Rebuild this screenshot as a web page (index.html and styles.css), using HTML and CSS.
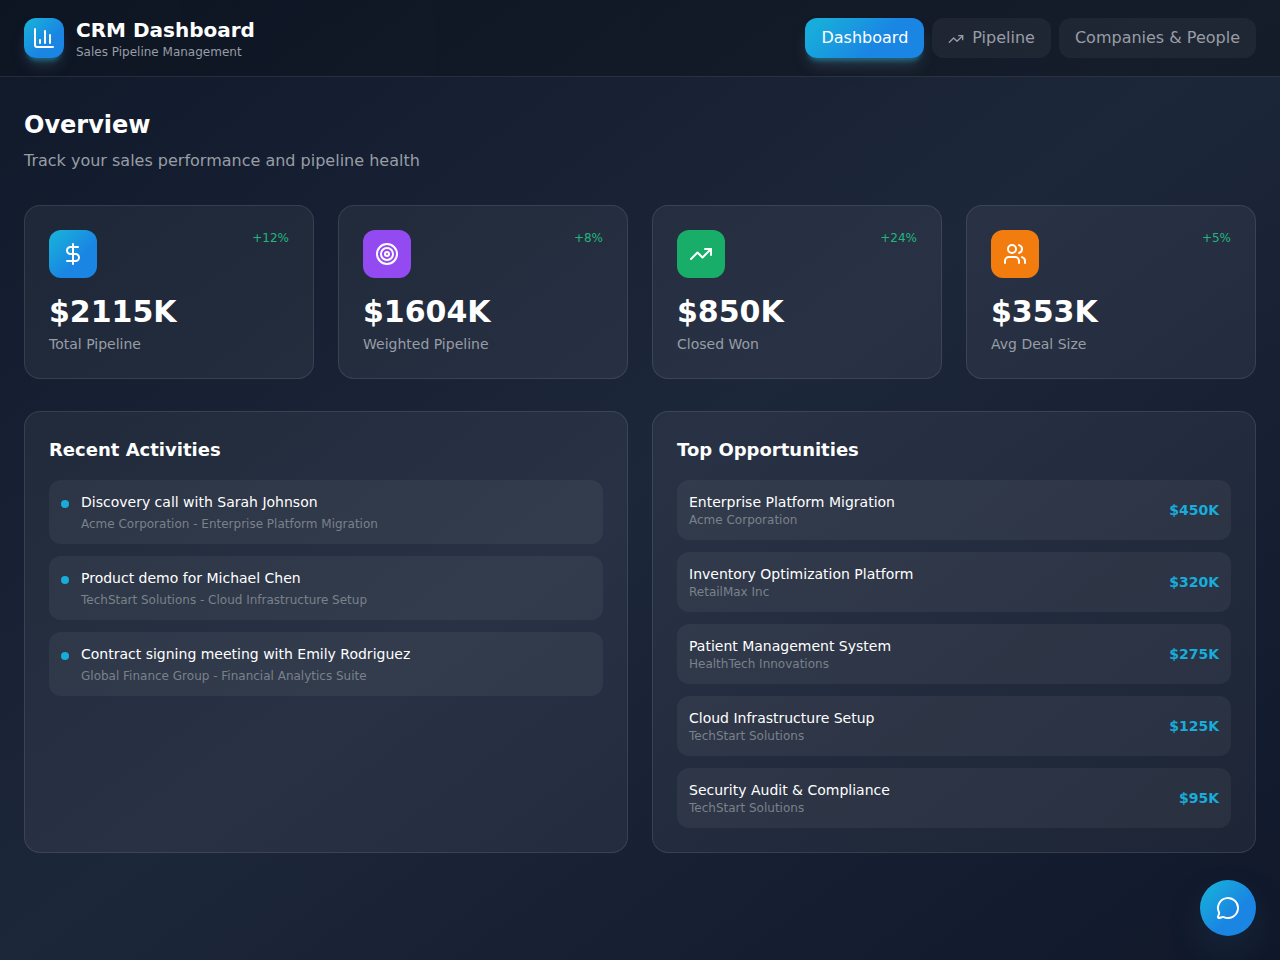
FILE: index.html
```html
<!DOCTYPE html>
<html lang="en">
<head>
<meta charset="utf-8">
<meta name="viewport" content="width=device-width, initial-scale=1">
<title>CRM Dashboard</title>
<link rel="stylesheet" href="styles.css">
</head>
<body>
<header class="topbar">
  <div class="brand">
    <div class="brand-logo">
      <svg class="icon" viewBox="0 0 24 24" aria-hidden="true"><path d="M3 3v16a2 2 0 0 0 2 2h16"/><path d="M18 17V9"/><path d="M13 17V5"/><path d="M8 17v-3"/></svg>
    </div>
    <div>
      <h1 class="brand-title">CRM Dashboard</h1>
      <p class="brand-subtitle">Sales Pipeline Management</p>
    </div>
  </div>
  <nav class="nav">
    <button class="nav-button nav-button-active" type="button">Dashboard</button>
    <button class="nav-button" type="button"><svg class="icon nav-icon" viewBox="0 0 24 24" aria-hidden="true"><path d="M16 7h6v6"/><path d="m22 7-8.500 8.500-5-5L2 17"/></svg>Pipeline</button>
    <button class="nav-button" type="button">Companies &amp; People</button>
  </nav>
</header>

<main class="content">
  <section class="intro">
    <h2 class="intro-title">Overview</h2>
    <p class="intro-text">Track your sales performance and pipeline health</p>
  </section>

  <section class="stats">
    <article class="card">
      <div class="stat-head">
        <div class="stat-icon stat-icon-blue"><svg class="icon" viewBox="0 0 24 24" aria-hidden="true"><path d="M12 2v20"/><path d="M17 5H9.500a3.500 3.500 0 0 0 0 7h5a3.500 3.500 0 0 1 0 7H6"/></svg></div>
        <span class="stat-change">+12%</span>
      </div>
      <p class="stat-value">$2115K</p>
      <p class="stat-label">Total Pipeline</p>
    </article>
    <article class="card">
      <div class="stat-head">
        <div class="stat-icon stat-icon-purple"><svg class="icon" viewBox="0 0 24 24" aria-hidden="true"><circle cx="12" cy="12" r="10"/><circle cx="12" cy="12" r="6"/><circle cx="12" cy="12" r="2"/></svg></div>
        <span class="stat-change">+8%</span>
      </div>
      <p class="stat-value">$1604K</p>
      <p class="stat-label">Weighted Pipeline</p>
    </article>
    <article class="card">
      <div class="stat-head">
        <div class="stat-icon stat-icon-green"><svg class="icon" viewBox="0 0 24 24" aria-hidden="true"><path d="M16 7h6v6"/><path d="m22 7-8.500 8.500-5-5L2 17"/></svg></div>
        <span class="stat-change">+24%</span>
      </div>
      <p class="stat-value">$850K</p>
      <p class="stat-label">Closed Won</p>
    </article>
    <article class="card">
      <div class="stat-head">
        <div class="stat-icon stat-icon-orange"><svg class="icon" viewBox="0 0 24 24" aria-hidden="true"><path d="M16 21v-2a4 4 0 0 0-4-4H6a4 4 0 0 0-4 4v2"/><circle cx="9" cy="7" r="4"/><path d="M22 21v-2a4 4 0 0 0-3-3.870"/><path d="M16 3.130a4 4 0 0 1 0 7.750"/></svg></div>
        <span class="stat-change">+5%</span>
      </div>
      <p class="stat-value">$353K</p>
      <p class="stat-label">Avg Deal Size</p>
    </article>
  </section>

  <section class="panels">
    <article class="card">
      <h3 class="panel-title">Recent Activities</h3>
      <ul class="list">
        <li class="row activity">
          <span class="activity-dot"></span>
          <div>
            <p class="row-title">Discovery call with Sarah Johnson</p>
            <p class="row-note activity-note">Acme Corporation - Enterprise Platform Migration</p>
          </div>
        </li>
        <li class="row activity">
          <span class="activity-dot"></span>
          <div>
            <p class="row-title">Product demo for Michael Chen</p>
            <p class="row-note activity-note">TechStart Solutions - Cloud Infrastructure Setup</p>
          </div>
        </li>
        <li class="row activity">
          <span class="activity-dot"></span>
          <div>
            <p class="row-title">Contract signing meeting with Emily Rodriguez</p>
            <p class="row-note activity-note">Global Finance Group - Financial Analytics Suite</p>
          </div>
        </li>
      </ul>
    </article>
    <article class="card">
      <h3 class="panel-title">Top Opportunities</h3>
      <ul class="list">
        <li class="row deal">
          <div>
            <p class="row-title">Enterprise Platform Migration</p>
            <p class="row-note">Acme Corporation</p>
          </div>
          <span class="deal-value">$450K</span>
        </li>
        <li class="row deal">
          <div>
            <p class="row-title">Inventory Optimization Platform</p>
            <p class="row-note">RetailMax Inc</p>
          </div>
          <span class="deal-value">$320K</span>
        </li>
        <li class="row deal">
          <div>
            <p class="row-title">Patient Management System</p>
            <p class="row-note">HealthTech Innovations</p>
          </div>
          <span class="deal-value">$275K</span>
        </li>
        <li class="row deal">
          <div>
            <p class="row-title">Cloud Infrastructure Setup</p>
            <p class="row-note">TechStart Solutions</p>
          </div>
          <span class="deal-value">$125K</span>
        </li>
        <li class="row deal">
          <div>
            <p class="row-title">Security Audit &amp; Compliance</p>
            <p class="row-note">TechStart Solutions</p>
          </div>
          <span class="deal-value">$95K</span>
        </li>
      </ul>
    </article>
  </section>
</main>

<button class="chat-button" type="button" aria-label="Open chat">
  <svg class="icon" viewBox="0 0 24 24" aria-hidden="true"><path d="M2.992 16.342a2 2 0 0 1 .094 1.167l-1.065 3.290a1 1 0 0 0 1.236 1.168l3.413-.998a2 2 0 0 1 1.099.092 10 10 0 1 0-4.777-4.719"/></svg>
</button>
</body>
</html>
```
FILE: styles.css
```css
:root {
  --accent: #18acdb;
  --accent-gradient: linear-gradient(135deg, #18acdb 12%, #1a85e3 62%);
  --accent-shadow: 0 10px 15px -3px rgba(110, 150, 175, 0.25), 0 6px 4px -3px rgba(6, 182, 212, 0.4);
  --muted: #989da6;
}

* {
  box-sizing: border-box;
  margin: 0;
  padding: 0;
}

body {
  min-height: 100vh;
  font-family: "DejaVu Sans", sans-serif;
  font-size: 16px;
  line-height: 24px;
  color: #fff;
  background: linear-gradient(to bottom right, #10192a, #1d273a, #10182a);
}

.icon {
  width: 24px;
  height: 24px;
  fill: none;
  stroke: currentColor;
  stroke-width: 2;
  stroke-linecap: round;
  stroke-linejoin: round;
}

.topbar {
  display: flex;
  align-items: center;
  justify-content: space-between;
  padding: 16px 24px;
  background: linear-gradient(to right, rgba(0, 0, 0, 0.18), rgba(0, 0, 0, 0.28));
  border-bottom: 1px solid rgba(255, 255, 255, 0.1);
}

.brand {
  display: flex;
  align-items: center;
  gap: 12px;
}

.brand-logo {
  display: flex;
  align-items: center;
  justify-content: center;
  width: 40px;
  height: 40px;
  border-radius: 12px;
  background: var(--accent-gradient);
  box-shadow: var(--accent-shadow);
}

.brand-title {
  font-size: 20px;
  line-height: 28px;
}

.brand-subtitle {
  font-size: 12px;
  line-height: 16px;
  color: var(--muted);
}

.nav {
  display: flex;
  gap: 8px;
}

.nav-button {
  padding: 8px 16px;
  border: 0;
  border-radius: 12px;
  font: inherit;
  color: var(--muted);
  background: rgba(255, 255, 255, 0.05);
  cursor: pointer;
}

.nav-button-active {
  color: #fff;
  background: var(--accent-gradient);
  box-shadow: var(--accent-shadow);
}

.nav-icon {
  width: 16px;
  height: 16px;
  margin-right: 8px;
  vertical-align: middle;
}

.content {
  padding: 32px 24px;
}

.intro {
  margin-bottom: 32px;
}

.intro-title {
  margin-bottom: 8px;
  font-size: 24px;
  line-height: 32px;
}

.intro-text {
  color: var(--muted);
}

.stats {
  display: grid;
  grid-template-columns: repeat(4, 1fr);
  gap: 24px;
  margin-bottom: 32px;
}

.panels {
  display: grid;
  grid-template-columns: repeat(2, 1fr);
  gap: 24px;
}

.card {
  padding: 24px;
  border: 1px solid rgba(255, 255, 255, 0.1);
  border-radius: 16px;
  background: rgba(255, 255, 255, 0.05);
}

.stat-head {
  display: flex;
  align-items: flex-start;
  justify-content: space-between;
  margin-bottom: 16px;
}

.stat-icon {
  display: flex;
  align-items: center;
  justify-content: center;
  width: 48px;
  height: 48px;
  border-radius: 12px;
}

.stat-icon-blue {
  background: var(--accent-gradient);
}

.stat-icon-purple {
  background: #934bf1;
}

.stat-icon-green {
  background: #18ae69;
}

.stat-icon-orange {
  background: #f27d0e;
}

.stat-change {
  font-size: 12px;
  line-height: 16px;
  color: #22b67c;
}

.stat-value {
  margin-bottom: 4px;
  font-size: 30px;
  font-weight: 700;
  line-height: 36px;
}

.stat-label {
  font-size: 14px;
  line-height: 20px;
  color: var(--muted);
}

.panel-title {
  margin-bottom: 16px;
  font-size: 18px;
  line-height: 28px;
}

.list {
  display: grid;
  gap: 12px;
  list-style: none;
}

.row {
  display: flex;
  gap: 12px;
  padding: 12px;
  border-radius: 12px;
  background: rgba(255, 255, 255, 0.05);
}

.row-title {
  font-size: 14px;
  line-height: 20px;
}

.row-note {
  font-size: 12px;
  line-height: 16px;
  color: #7a818b;
}

.activity {
  align-items: flex-start;
}

.activity-dot {
  width: 8px;
  height: 8px;
  margin-top: 8px;
  border-radius: 50%;
  background: var(--accent);
}

.activity-note {
  margin-top: 4px;
}

.deal {
  align-items: center;
  justify-content: space-between;
}

.deal-value {
  font-size: 14px;
  font-weight: 700;
  line-height: 20px;
  color: var(--accent);
}

.chat-button {
  position: fixed;
  right: 24px;
  bottom: 24px;
  display: flex;
  align-items: center;
  justify-content: center;
  width: 56px;
  height: 56px;
  border: 0;
  border-radius: 50%;
  color: #fff;
  background: var(--accent-gradient);
  box-shadow: 0 16px 40px -4px rgba(60, 130, 170, 0.18);
  cursor: pointer;
}
```
